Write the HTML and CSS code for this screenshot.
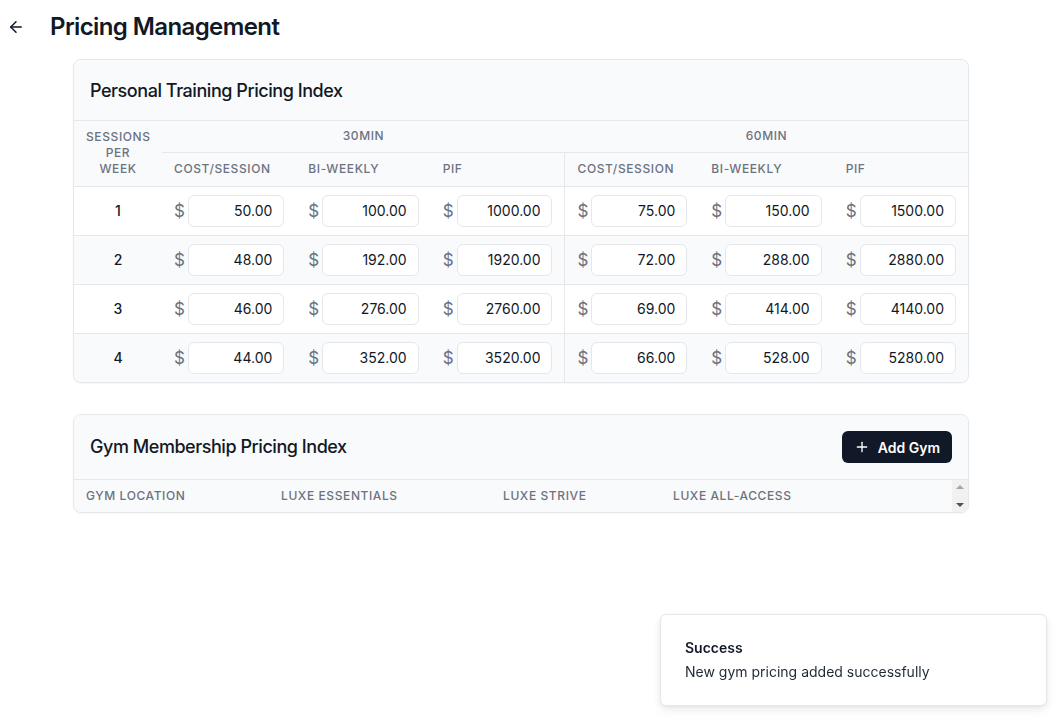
FILE: index.html
```html
<!DOCTYPE html>
<html>
<head>
<meta charset="utf-8">
<link rel="stylesheet" href="styles.css">
</head>
<body>
<div class="page">
  <header class="topbar">
    <button class="back" aria-label="Back">
      <svg width="18" height="18" viewBox="0 0 24 24" fill="none" stroke="currentColor" stroke-width="2" stroke-linecap="round" stroke-linejoin="round"><path d="m12 19-7-7 7-7"/><path d="M19 12H5"/></svg>
    </button>
    <h1 class="title">Pricing Management</h1>
  </header>

  <main class="content">
    <section class="card">
      <div class="card-head"><h2>Personal Training Pricing Index</h2></div>
      <table class="pt">
        <colgroup>
          <col class="c-sess"><col><col><col><col><col><col>
        </colgroup>
        <thead>
          <tr class="h1">
            <th rowspan="2" class="sess">Sessions per week</th>
            <th colspan="3" class="grp">30min</th>
            <th colspan="3" class="grp">60min</th>
          </tr>
          <tr class="h2">
            <th>Cost/Session</th><th>Bi-Weekly</th><th>PIF</th>
            <th class="sep">Cost/Session</th><th>Bi-Weekly</th><th>PIF</th>
          </tr>
        </thead>
        <tbody>
          <tr>
            <td class="num">1</td>
            <td><div class="money"><span>$</span><input value="50.00"></div></td>
            <td><div class="money"><span>$</span><input value="100.00"></div></td>
            <td><div class="money"><span>$</span><input value="1000.00"></div></td>
            <td class="sep"><div class="money"><span>$</span><input value="75.00"></div></td>
            <td><div class="money"><span>$</span><input value="150.00"></div></td>
            <td><div class="money"><span>$</span><input value="1500.00"></div></td>
          </tr>
          <tr class="alt">
            <td class="num">2</td>
            <td><div class="money"><span>$</span><input value="48.00"></div></td>
            <td><div class="money"><span>$</span><input value="192.00"></div></td>
            <td><div class="money"><span>$</span><input value="1920.00"></div></td>
            <td class="sep"><div class="money"><span>$</span><input value="72.00"></div></td>
            <td><div class="money"><span>$</span><input value="288.00"></div></td>
            <td><div class="money"><span>$</span><input value="2880.00"></div></td>
          </tr>
          <tr>
            <td class="num">3</td>
            <td><div class="money"><span>$</span><input value="46.00"></div></td>
            <td><div class="money"><span>$</span><input value="276.00"></div></td>
            <td><div class="money"><span>$</span><input value="2760.00"></div></td>
            <td class="sep"><div class="money"><span>$</span><input value="69.00"></div></td>
            <td><div class="money"><span>$</span><input value="414.00"></div></td>
            <td><div class="money"><span>$</span><input value="4140.00"></div></td>
          </tr>
          <tr class="alt">
            <td class="num">4</td>
            <td><div class="money"><span>$</span><input value="44.00"></div></td>
            <td><div class="money"><span>$</span><input value="352.00"></div></td>
            <td><div class="money"><span>$</span><input value="3520.00"></div></td>
            <td class="sep"><div class="money"><span>$</span><input value="66.00"></div></td>
            <td><div class="money"><span>$</span><input value="528.00"></div></td>
            <td><div class="money"><span>$</span><input value="5280.00"></div></td>
          </tr>
        </tbody>
      </table>
    </section>

    <section class="card">
      <div class="card-head with-action">
        <h2>Gym Membership Pricing Index</h2>
        <button class="btn">
          <svg width="16" height="16" viewBox="0 0 24 24" fill="none" stroke="currentColor" stroke-width="2" stroke-linecap="round" stroke-linejoin="round"><path d="M5 12h14"/><path d="M12 5v14"/></svg>
          <span>Add Gym</span>
        </button>
      </div>
      <div class="gym-wrap">
        <table class="gym">
          <thead>
            <tr>
              <th class="g1">Gym Location</th>
              <th class="g2">Luxe Essentials</th>
              <th class="g3">Luxe Strive</th>
              <th>Luxe All-Access</th>
            </tr>
          </thead>
        </table>
        <div class="scrollbar" aria-hidden="true">
          <span class="arrow up"></span>
          <span class="arrow down"></span>
        </div>
      </div>
    </section>
  </main>
</div>

<div class="toast">
  <div class="toast-title">Success</div>
  <div class="toast-msg">New gym pricing added successfully</div>
</div>
</body>
</html>
```

FILE: styles.css
```css
* { box-sizing: border-box; }

html, body {
  margin: 0;
  background: #ffffff;
  font-family: Inter, "Noto Sans", "Liberation Sans", sans-serif;
  color: #111827;
}

.page {
  width: 1058px;
  min-height: 718px;
}

.topbar {
  display: flex;
  align-items: center;
  gap: 25px;
  padding: 11px 0 0 7px;
  height: 43px;
}

.back {
  display: flex;
  align-items: center;
  justify-content: center;
  width: 18px;
  height: 32px;
  padding: 0;
  border: none;
  background: transparent;
  color: #111827;
}

.title {
  margin: 0;
  font-size: 24px;
  line-height: 32px;
  font-weight: 600;
  letter-spacing: -0.6px;
}

.content {
  display: flex;
  flex-direction: column;
  gap: 31px;
  width: 896px;
  margin: 16px 0 0 73px;
}

.card {
  border: 1px solid #e5e7eb;
  border-radius: 8px;
  background: #fff;
  overflow: hidden;
  box-shadow: 0 1px 2px rgba(0,0,0,0.04);
}

.card-head {
  background: #f9fafb;
  border-bottom: 1px solid #e5e7eb;
  padding: 17px 16px 15px;
  display: flex;
  align-items: center;
  justify-content: space-between;
}

.card-head.with-action { padding: 16px; }

.card-head h2 {
  margin: 0;
  font-size: 18px;
  line-height: 28px;
  font-weight: 500;
  letter-spacing: -0.45px;
  color: #111827;
}

.card-head.with-action h2 { line-height: 32px; }

.btn {
  display: flex;
  align-items: center;
  gap: 8px;
  height: 32px;
  padding: 0 12px;
  border: none;
  border-radius: 6px;
  background: #111827;
  color: #fff;
  font-family: inherit;
  font-size: 14px;
  font-weight: 600;
}

/* Personal training table */
.pt {
  width: 100%;
  border-collapse: collapse;
  table-layout: fixed;
}

.c-sess { width: 88px; }

.pt th {
  background: #f9fafb;
  font-size: 12px;
  line-height: 16px;
  font-weight: 500;
  letter-spacing: 0.05em;
  text-transform: uppercase;
  color: #6b7280;
  text-align: left;
  padding: 0 12px;
}

.pt .h1 th { height: 31px; }
.pt .h1 .grp {
  text-align: center;
  border-bottom: 1px solid #e5e7eb;
}
.pt .sess { text-align: center; }
.pt .h2 th { height: 34px; }

.pt .sep { border-left: 1px solid #e5e7eb; }

.pt tbody tr { border-top: 1px solid #e5e7eb; }
.pt tbody tr.alt td { background: #f9fafb; }

.pt td {
  padding: 8px 12px;
  height: 49px;
}

.pt td.num {
  text-align: center;
  font-size: 14px;
  font-weight: 500;
  color: #111827;
}

.money {
  display: flex;
  align-items: center;
  gap: 5px;
}

.money span {
  font-size: 17px;
  color: #6b7280;
  width: 9px;
}

.money input {
  flex: 1;
  min-width: 0;
  width: 96px;
  height: 32px;
  border: 1px solid #e5e7eb;
  border-radius: 6px;
  background: #fff;
  padding: 0 11px;
  text-align: right;
  font-family: inherit;
  font-size: 14px;
  color: #111827;
}

/* Gym table */
.gym-wrap {
  display: flex;
  height: 32px;
}

.gym {
  flex: 1;
  border-collapse: collapse;
  table-layout: fixed;
}

.gym th {
  background: #f9fafb;
  height: 32px;
  padding: 0 12px;
  text-align: left;
  font-size: 12px;
  line-height: 16px;
  font-weight: 500;
  letter-spacing: 0.05em;
  text-transform: uppercase;
  color: #6b7280;
}

.gym .g1 { width: 195px; }
.gym .g2 { width: 222px; }
.gym .g3 { width: 170px; }

.scrollbar {
  width: 16px;
  flex: none;
  background: #f1f1f1;
  display: flex;
  flex-direction: column;
  align-items: center;
  justify-content: space-between;
  padding: 5px 0 5px;
}

.arrow {
  width: 0;
  height: 0;
  border-left: 4px solid transparent;
  border-right: 4px solid transparent;
}

.arrow.up { border-bottom: 4px solid #a3a3a3; }
.arrow.down { border-top: 4px solid #505050; }

/* Toast */
.toast {
  position: fixed;
  right: 11px;
  bottom: 12px;
  width: 387px;
  padding: 23px 24px;
  background: #fff;
  border: 1px solid #e5e7eb;
  border-radius: 6px;
  box-shadow: 0 4px 10px rgba(0,0,0,0.08), 0 1px 3px rgba(0,0,0,0.06);
}

.toast-title {
  font-size: 14px;
  line-height: 20px;
  font-weight: 600;
  color: #111827;
}

.toast-msg {
  margin-top: 4px;
  font-size: 14px;
  line-height: 20px;
  color: #1f2937;
}
```
